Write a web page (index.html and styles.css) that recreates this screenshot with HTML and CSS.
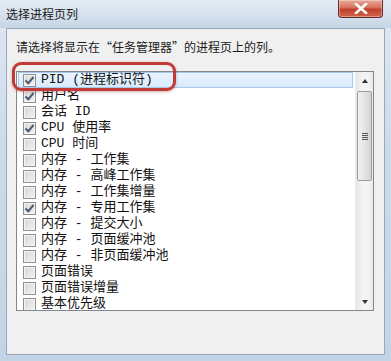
FILE: index.html
```html
<!DOCTYPE html>
<html lang="zh-CN">
<head>
    <meta charset="UTF-8">
    <title>选择进程页列</title>
    <link rel="stylesheet" href="styles.css">
</head>
<body>
    <div class="window">
        <div class="titlebar">
            <span class="title">选择进程页列</span>
            <div class="close-btn">
                <svg width="14" height="11" viewBox="0 0 14 11">
                    <path d="M2 1 L12 10 M12 1 L2 10" stroke="#fff" stroke-width="2.6" stroke-linecap="square"/>
                </svg>
            </div>
        </div>
        <div class="client">
            <p class="hint">请选择将显示在“任务管理器”的进程页上的列。</p>
            <div class="listbox">
                <ul class="rows">
                    <li class="row selected"><span class="check on"></span>PID (进程标识符)</li>
                    <li class="row"><span class="check on"></span>用户名</li>
                    <li class="row"><span class="check"></span>会话 ID</li>
                    <li class="row"><span class="check on"></span>CPU 使用率</li>
                    <li class="row"><span class="check"></span>CPU 时间</li>
                    <li class="row"><span class="check"></span>内存 - 工作集</li>
                    <li class="row"><span class="check"></span>内存 - 高峰工作集</li>
                    <li class="row"><span class="check"></span>内存 - 工作集增量</li>
                    <li class="row"><span class="check on"></span>内存 - 专用工作集</li>
                    <li class="row"><span class="check"></span>内存 - 提交大小</li>
                    <li class="row"><span class="check"></span>内存 - 页面缓冲池</li>
                    <li class="row"><span class="check"></span>内存 - 非页面缓冲池</li>
                    <li class="row"><span class="check"></span>页面错误</li>
                    <li class="row"><span class="check"></span>页面错误增量</li>
                    <li class="row"><span class="check"></span>基本优先级</li>
                </ul>
                <div class="scrollbar">
                    <div class="sb-btn"><span class="arrow up"></span></div>
                    <div class="thumb"><span class="grip"></span></div>
                    <div class="sb-space"></div>
                    <div class="sb-btn"><span class="arrow down"></span></div>
                </div>
            </div>
            <div class="mark"></div>
        </div>
    </div>
</body>
</html>
```

FILE: styles.css
```css
html, body {
    margin: 0;
    padding: 0;
}
body {
    width: 391px;
    height: 361px;
    overflow: hidden;
    font-family: "Noto Sans CJK SC", sans-serif;
}
.window {
    width: 391px;
    height: 361px;
    display: flex;
    flex-direction: column;
    background: linear-gradient(180deg, #dfe8f2 0%, #ccdbea 40%, #c3d4e6 100%);
}
.titlebar {
    height: 28px;
    display: flex;
    justify-content: space-between;
    align-items: flex-start;
    padding-left: 6px;
    background: linear-gradient(180deg, #e4ecf4 0%, #d3dfeb 60%, #c5d5e6 100%);
}
.title {
    font-size: 12px;
    line-height: 12px;
    margin-top: 8px;
    color: #1a1a1a;
}
.close-btn {
    width: 43px;
    height: 17px;
    margin-right: 8px;
    display: flex;
    align-items: center;
    justify-content: center;
    border: 1px solid #6b2a25;
    border-top: none;
    border-radius: 0 0 4px 4px;
    background: linear-gradient(180deg, #e8a99a 0%, #d7705c 45%, #c0402c 55%, #d0664c 100%);
    box-shadow: inset 0 0 0 1px rgba(255, 255, 255, 0.35);
}
.client {
    position: relative;
    flex: 1;
    margin: 0 6px 6px 6px;
    background: #f0f0f0;
    border: 1px solid #97a8ba;
    padding: 0 0 0 9px;
}
.hint {
    margin: 11px 0 0 0;
    font-size: 12px;
    line-height: 14px;
    color: #1a1a1a;
}
.listbox {
    margin-top: 17px;
    width: 356px;
    height: 238px;
    border: 1px solid #828790;
    background: #fff;
    display: flex;
    overflow: hidden;
}
.rows {
    list-style: none;
    margin: 0;
    padding: 0;
    flex: 1;
}
.row {
    height: 16px;
    margin: 0 2px 0 1px;
    padding-left: 5px;
    display: flex;
    align-items: center;
    font-family: "Liberation Mono", "Noto Sans CJK SC", monospace;
    font-size: 13px;
    line-height: 16px;
    color: #111;
    white-space: pre;
    box-sizing: border-box;
}
.row.selected {
    border: 1px solid #a7c8ec;
    background: linear-gradient(180deg, #eaf4fe 0%, #d8eafc 100%);
    padding-left: 4px;
}
.check {
    width: 11px;
    height: 11px;
    margin-right: 5px;
    flex: none;
    border: 1px solid #8f8f8f;
    background: linear-gradient(135deg, #d6d6d6 0%, #f2f2f2 100%);
    box-shadow: inset 0 0 0 1px #f4f4f4;
    position: relative;
}
.check.on::after {
    content: "";
    position: absolute;
    left: 3px;
    top: 0px;
    width: 3px;
    height: 7px;
    border: solid #4a5a6e;
    border-width: 0 2px 2px 0;
    transform: rotate(40deg);
}
.scrollbar {
    width: 17px;
    display: flex;
    flex-direction: column;
    background: linear-gradient(90deg, #e6e6e6 0%, #f4f4f4 40%, #f4f4f4 70%, #e8e8e8 100%);
    border-left: 1px solid #ededed;
}
.sb-btn {
    height: 17px;
    display: flex;
    align-items: center;
    justify-content: center;
}
.arrow {
    width: 0;
    height: 0;
    border-left: 3.5px solid transparent;
    border-right: 3.5px solid transparent;
}
.arrow.up {
    border-bottom: 4px solid #333;
}
.arrow.down {
    border-top: 4px solid #333;
}
.thumb {
    height: 88px;
    margin: 2px 1px 0 1px;
    border: 1px solid #9d9d9d;
    border-radius: 2px;
    background: linear-gradient(90deg, #f2f2f2 0%, #e4e4e4 50%, #d2d2d2 100%);
    display: flex;
    align-items: center;
    justify-content: center;
}
.grip {
    width: 6px;
    height: 7px;
    background: repeating-linear-gradient(180deg, #555 0px, #555 1px, transparent 1px, transparent 2px);
}
.sb-space {
    flex: 1;
}
.mark {
    position: absolute;
    left: 5px;
    top: 33px;
    width: 158px;
    height: 23px;
    border: 3px solid #c23a36;
    border-radius: 9px;
    box-shadow: 0 1px 3px rgba(120, 20, 20, 0.35);
}
```
